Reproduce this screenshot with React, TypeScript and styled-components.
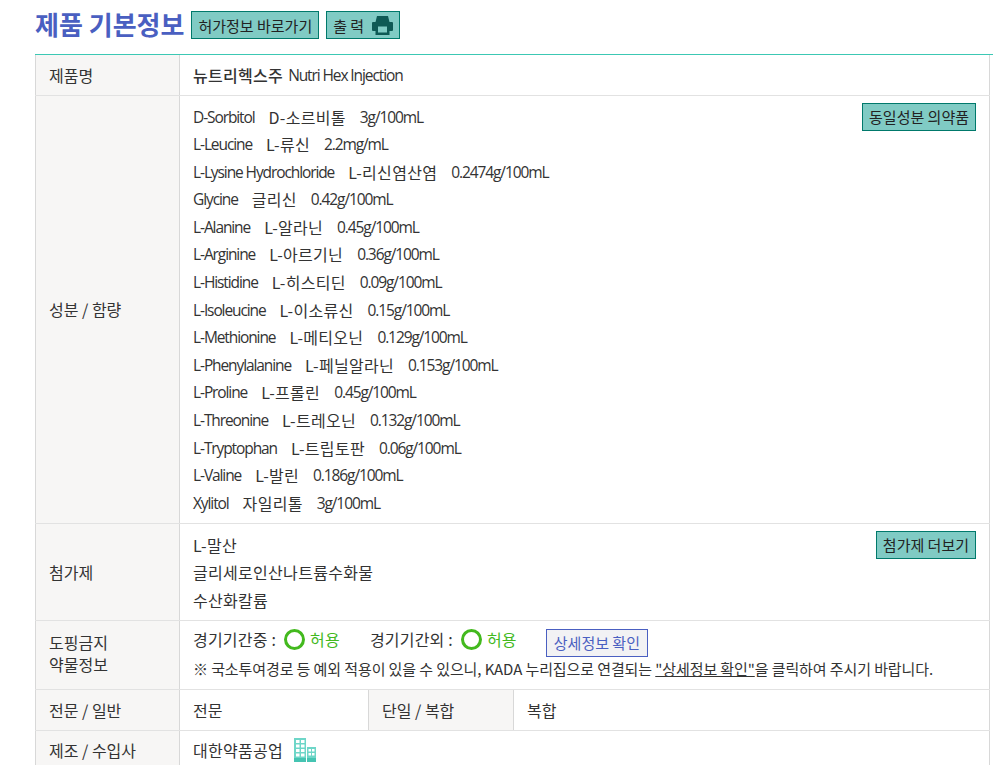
import React from 'react'
import styled, { createGlobalStyle } from 'styled-components'

const GlobalStyle = createGlobalStyle`
  html, body {
    margin: 0;
    padding: 0;
    background: #fff;
    overflow: hidden;
    height: 765px;
  }
  body {
    font-family: "Noto Sans CJK KR", "Noto Sans", sans-serif;
    font-size: 16px;
    color: #333;
  }
`

const Page = styled.div`
  padding: 8px 0 0 35px;
`

const TitleRow = styled.div`
  display: flex;
  align-items: flex-start;
  height: 46px;
`

const Title = styled.h2`
  margin: 0 7px 0 0;
  font-size: 26px;
  line-height: 32px;
  font-weight: 700;
  color: #4a5fc1;
`

const TealButton = styled.button`
  display: inline-flex;
  align-items: center;
  justify-content: center;
  gap: 8px;
  box-sizing: border-box;
  height: 28px;
  margin: 3px 7px 0 0;
  padding: 0 6px;
  border: 1px solid #00796b;
  background: #80cbc4;
  color: #222;
  font-family: inherit;
  font-size: 15px;
  white-space: nowrap;
`

const FloatButton = styled(TealButton)`
  float: right;
  margin: -1px 0 0 10px;
`

const InfoTable = styled.table`
  box-sizing: border-box;
  width: 955px;
  border-collapse: collapse;
  table-layout: fixed;
  border-left: 1px solid #d8d8d8;
  border-right: 1px solid #d8d8d8;
`

const TopLine = styled.div`
  height: 1px;
  background: #3cc8b4;
`

const Row = styled.tr<{ $height: number }>`
  height: ${p => p.$height}px;
`

const Head = styled.th`
  padding: 0 13px;
  box-sizing: border-box;
  background: #f7f6f5;
  border-right: 1px solid #d8d8d8;
  border-bottom: 1px solid #e2e2e2;
  text-align: left;
  font-weight: 400;
  font-size: 16px;
  line-height: 22px;
`

const InnerHead = styled(Head)`
  border-left: 1px solid #d8d8d8;
`

const DopingHead = styled(Head)`
  padding-bottom: 3px;
`

const Cell = styled.td`
  padding: 0 13px;
  border-bottom: 1px solid #e2e2e2;
  font-size: 16px;
  vertical-align: middle;
`

const TopCell = styled(Cell)`
  vertical-align: top;
  padding: 8px 13px 5px;
`

const DopingCell = styled(Cell)`
  vertical-align: top;
  padding: 8px 13px 0;
`

const ListLine = styled.div`
  display: flex;
  gap: 14px;
  height: 27.6px;
  line-height: 27.6px;
  letter-spacing: 0.3px;
  white-space: nowrap;
`

const Latin = styled.span`
  font-family: "Open Sans", sans-serif;
  font-size: 15.5px;
  letter-spacing: -1.1px;
`

const ProductRow = styled.div`
  display: flex;
  align-items: center;
  gap: 5px;
`

const ProductName = styled.strong`
  font-weight: 500;
  letter-spacing: 0.3px;
`

const DopingRow = styled.div`
  display: flex;
  align-items: flex-start;
  height: 28px;
  line-height: 21px;
  letter-spacing: 0.2px;
  white-space: nowrap;
`

const Ring = styled.span`
  box-sizing: border-box;
  flex: none;
  width: 21px;
  height: 21px;
  margin: 0 5px 0 8px;
  border: 3px solid #43b91e;
  border-radius: 50%;
`

const Allowed = styled.span`
  color: #43b91e;
  margin-right: 30px;
`

const DetailButton = styled.button`
  box-sizing: border-box;
  height: 28px;
  margin-left: -1px;
  padding: 0 7px;
  border: 1px solid #4a5fc1;
  background: #f2f2f4;
  color: #4a5fc1;
  font-family: inherit;
  font-size: 15px;
`

const Note = styled.div`
  font-size: 15px;
  line-height: 24px;
  letter-spacing: -0.1px;
  white-space: nowrap;
`

const NoteLink = styled.span`
  text-decoration: underline;
`

const CompanyRow = styled.div`
  display: flex;
  align-items: center;
  gap: 11px;
  letter-spacing: 0.3px;
`

type Ingredient = [string, string, string]

const ingredients: Ingredient[] = [
  ['D-Sorbitol', 'D-소르비톨', '3g/100mL'],
  ['L-Leucine', 'L-류신', '2.2mg/mL'],
  ['L-Lysine Hydrochloride', 'L-리신염산염', '0.2474g/100mL'],
  ['Glycine', '글리신', '0.42g/100mL'],
  ['L-Alanine', 'L-알라닌', '0.45g/100mL'],
  ['L-Arginine', 'L-아르기닌', '0.36g/100mL'],
  ['L-Histidine', 'L-히스티딘', '0.09g/100mL'],
  ['L-Isoleucine', 'L-이소류신', '0.15g/100mL'],
  ['L-Methionine', 'L-메티오닌', '0.129g/100mL'],
  ['L-Phenylalanine', 'L-페닐알라닌', '0.153g/100mL'],
  ['L-Proline', 'L-프롤린', '0.45g/100mL'],
  ['L-Threonine', 'L-트레오닌', '0.132g/100mL'],
  ['L-Tryptophan', 'L-트립토판', '0.06g/100mL'],
  ['L-Valine', 'L-발린', '0.186g/100mL'],
  ['Xylitol', '자일리톨', '3g/100mL'],
]

const additives = ['L-말산', '글리세로인산나트륨수화물', '수산화칼륨']

function PrinterIcon() {
  return (
    <svg width="21" height="19" viewBox="0 0 21 19" aria-hidden="true">
      <path
        fill="#0e5a55"
        fillRule="evenodd"
        d="M5 0h11l1.500 6H20a1 1 0 0 1 1 1v7a1 1 0 0 1-1 1h-2.500v4h-14v-4H1a1 1 0 0 1-1-1V7a1 1 0 0 1 1-1h2.500L5 0zM6 10.500V16.500h9V10.500H6z"
      />
    </svg>
  )
}

function BuildingIcon() {
  const windows = (x0: number, y0: number, cols: number, rows: number, w: number, h: number, gx: number, gy: number) => {
    const out: React.ReactNode[] = []
    for (let r = 0; r < rows; r++) {
      for (let c = 0; c < cols; c++) {
        out.push(<rect key={`${x0}-${r}-${c}`} x={x0 + c * gx} y={y0 + r * gy} width={w} height={h} fill="#fff" />)
      }
    }
    return out
  }
  return (
    <svg width="22" height="24" viewBox="0 0 22 24" aria-hidden="true">
      <rect x="0" y="0" width="12" height="24" fill="#6ed6c8" />
      <rect x="0" y="20" width="12" height="4" fill="#45c4b2" />
      <rect x="13" y="9" width="9" height="15" fill="#6ed6c8" />
      <rect x="13" y="20" width="9" height="4" fill="#45c4b2" />
      {windows(2, 2, 2, 4, 3.5, 3, 5, 4.5)}
      {windows(14.5, 11, 2, 2, 2.5, 2.5, 3.5, 4)}
    </svg>
  )
}

export default function App() {
  return (
    <Page>
      <GlobalStyle />
      <TitleRow>
        <Title>제품 기본정보</Title>
        <TealButton>허가정보 바로가기</TealButton>
        <TealButton>
          출 력 <PrinterIcon />
        </TealButton>
      </TitleRow>
      <TopLine />
      <InfoTable>
        <colgroup>
          <col style={{ width: 144 }} />
          <col style={{ width: 189 }} />
          <col style={{ width: 145 }} />
          <col />
        </colgroup>
        <tbody>
          <Row $height={40}>
            <Head>제품명</Head>
            <Cell colSpan={3}>
              <ProductRow>
                <ProductName>뉴트리헥스주</ProductName>
                <Latin>Nutri Hex Injection</Latin>
              </ProductRow>
            </Cell>
          </Row>
          <Row $height={428}>
            <Head>성분 / 함량</Head>
            <TopCell colSpan={3}>
              <FloatButton>동일성분 의약품</FloatButton>
              {ingredients.map(([name, korean, amount]) => (
                <ListLine key={name}>
                  <Latin>{name}</Latin>
                  <span>{korean}</span>
                  <Latin>{amount}</Latin>
                </ListLine>
              ))}
            </TopCell>
          </Row>
          <Row $height={97}>
            <Head>첨가제</Head>
            <TopCell colSpan={3}>
              <FloatButton>첨가제 더보기</FloatButton>
              {additives.map(line => (
                <ListLine key={line}>{line}</ListLine>
              ))}
            </TopCell>
          </Row>
          <Row $height={69}>
            <DopingHead>
              도핑금지
              <br />
              약물정보
            </DopingHead>
            <DopingCell colSpan={3}>
              <DopingRow>
                경기기간중 :<Ring />
                <Allowed>허용</Allowed>
                경기기간외 :<Ring />
                <Allowed>허용</Allowed>
                <DetailButton>상세정보 확인</DetailButton>
              </DopingRow>
              <Note>
                ※ 국소투여경로 등 예외 적용이 있을 수 있으니, KADA 누리집으로 연결되는{' '}
                <NoteLink>"상세정보 확인"</NoteLink>을 클릭하여 주시기 바랍니다.
              </Note>
            </DopingCell>
          </Row>
          <Row $height={41}>
            <Head>전문 / 일반</Head>
            <Cell>전문</Cell>
            <InnerHead>단일 / 복합</InnerHead>
            <Cell>복합</Cell>
          </Row>
          <Row $height={39}>
            <Head>제조 / 수입사</Head>
            <Cell colSpan={3}>
              <CompanyRow>
                대한약품공업 <BuildingIcon />
              </CompanyRow>
            </Cell>
          </Row>
        </tbody>
      </InfoTable>
    </Page>
  )
}
